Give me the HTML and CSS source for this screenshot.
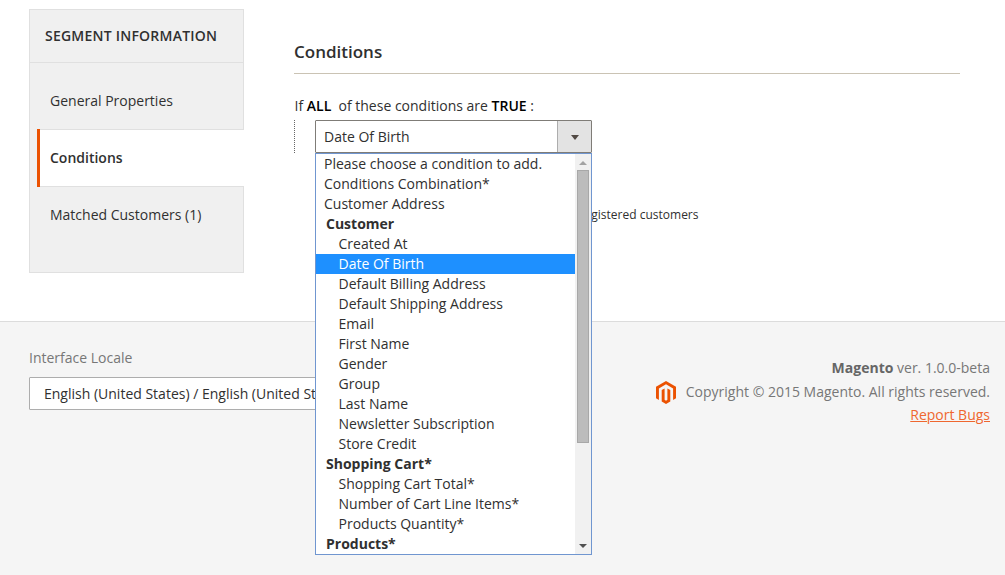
FILE: index.html
```html
<!DOCTYPE html>
<html lang="en">
<head>
<meta charset="utf-8">
<title>Customer Segment</title>
<link rel="stylesheet" href="styles.css">
</head>
<body>
<div class="page">
  <div class="content">
    <nav class="tabs">
      <div class="tabs-title">SEGMENT INFORMATION</div>
      <ul class="tabs-list">
        <li class="tab">General Properties</li>
        <li class="tab tab-active">Conditions</li>
        <li class="tab">Matched Customers (1)</li>
      </ul>
    </nav>
    <main class="main">
      <h2 class="heading">Conditions</h2>
      <p class="rule">If <b>ALL</b> &nbsp;of these conditions are <b>TRUE</b> :</p>
      <div class="rule-children">
        <div class="select">
          <span class="select-value">Date Of Birth</span>
          <span class="select-button"><svg width="8" height="5" viewBox="0 0 8 5"><path d="M0 0h8L4 5z" fill="#514943"/></svg></span>
          <div class="dropdown">
            <ul class="options">
              <li class="option">Please choose a condition to add.</li>
              <li class="option">Conditions Combination*</li>
              <li class="option">Customer Address</li>
              <li class="group">Customer</li>
              <li class="option nested">Created At</li>
              <li class="option nested selected">Date Of Birth</li>
              <li class="option nested">Default Billing Address</li>
              <li class="option nested">Default Shipping Address</li>
              <li class="option nested">Email</li>
              <li class="option nested">First Name</li>
              <li class="option nested">Gender</li>
              <li class="option nested">Group</li>
              <li class="option nested">Last Name</li>
              <li class="option nested">Newsletter Subscription</li>
              <li class="option nested">Store Credit</li>
              <li class="group">Shopping Cart*</li>
              <li class="option nested">Shopping Cart Total*</li>
              <li class="option nested">Number of Cart Line Items*</li>
              <li class="option nested">Products Quantity*</li>
              <li class="group">Products*</li>
            </ul>
            <div class="scrollbar">
              <svg class="arrow" width="16" height="16" viewBox="0 0 16 16"><path d="M4 11h8L8 7z" fill="#a3a3a3"/></svg>
              <div class="thumb"></div>
              <svg class="arrow arrow-down" width="16" height="16" viewBox="0 0 16 16"><path d="M4 6h8l-4 4z" fill="#505050"/></svg>
            </div>
          </div>
        </div>
      </div>
      <p class="note">registered customers</p>
    </main>
  </div>
  <footer class="footer">
    <div class="locale">
      <div class="locale-label">Interface Locale</div>
      <div class="locale-select">English (United States) / English (United States)</div>
    </div>
    <div class="legal">
      <div class="version"><strong>Magento</strong> ver. 1.0.0-beta</div>
      <div class="copyright">
        <svg class="logo" width="20" height="23" viewBox="0 0 20 23"><path d="M10 0l10 5.7v11.5l-2.9 1.7V7.4L10 3.3 2.9 7.4v11.5L0 17.2V5.7z" fill="#eb5202"/><path d="M5.7 9l2.9-1.6v11.4l1.4.9 1.4-.9V7.4L14.3 9v11.5L10 23l-4.3-2.5z" fill="#eb5202"/></svg>
        <span>Copyright © 2015 Magento. All rights reserved.</span>
      </div>
      <a class="report">Report Bugs</a>
    </div>
  </footer>
</div>
</body>
</html>
```
FILE: styles.css
```css
* { box-sizing: border-box; }
body {
  margin: 0;
  background: #fff;
  color: #303030;
  font: 14px/20px "Open Sans", "Noto Sans", sans-serif;
}
ul, p, h2 { margin: 0; padding: 0; list-style: none; }
.page {
  display: flex;
  flex-direction: column;
  width: 1005px;
  height: 575px;
  overflow: hidden;
}
.content {
  display: flex;
  align-items: flex-start;
  gap: 50px;
  height: 321px;
  padding: 9px 45px 0 29px;
}
.tabs {
  width: 215px;
  height: 264px;
  flex: none;
  background: #f0f0f0;
  border: 1px solid #e0e0e0;
}
.tabs-title {
  height: 53px;
  padding: 16px 15px 0;
  border-bottom: 1px solid #e0e0e0;
  font-weight: 600;
  letter-spacing: 0.23px;
}
.tabs-list { padding: 9px 0 0 7px; }
.tab {
  height: 57px;
  padding: 19px 0 0 13px;
}
.tab-active {
  height: 58px;
  margin-right: -1px;
  padding: 18px 0 0 10px;
  background:
    linear-gradient(#e0e0e0, #e0e0e0) top / 100% 1px no-repeat,
    linear-gradient(#e0e0e0, #e0e0e0) bottom / 100% 1px no-repeat,
    #fff;
  border-left: 3px solid #eb5202;
  padding-top: 19px;
  font-weight: 600;
}
.tab-active + .tab { padding-top: 18px; }
.main { width: 666px; }
.heading {
  height: 65px;
  padding-top: 33px;
  border-bottom: 1px solid #cac3b4;
  font-size: 17px;
  font-weight: 600;
}
.rule { padding: 22px 0 0 0.5px; }
.rule b { color: #000; font-weight: 600; }
.rule-children {
  height: 33px;
  margin-top: 4px;
  padding-left: 20px;
  border-left: 1px dotted #666;
}
.select {
  position: relative;
  display: flex;
  width: 277px;
  height: 33px;
  border: 1px solid #7f7c77;
  border-radius: 1px;
}
.select-value { flex: 1; padding: 6px 8px; }
.select-button {
  display: flex;
  align-items: center;
  justify-content: center;
  width: 34px;
  padding-top: 2px;
  background: #e3e3e3;
  border-left: 1px solid #adadad;
}
.dropdown {
  position: absolute;
  z-index: 2;
  top: 32px;
  left: -1px;
  display: flex;
  width: 277px;
  height: 402px;
  background: #fff;
  border: 1px solid #7096d0;
}
.options { flex: 1; }
.option { height: 20px; padding-left: 8px; }
.group { height: 20px; padding-left: 10px; font-weight: 700; }
.nested { padding-left: 22.5px; }
.selected { background: #1e90ff; color: #fff; }
.scrollbar {
  display: flex;
  flex-direction: column;
  align-items: center;
  width: 16px;
  background: #f1f1f1;
}
.arrow { flex: none; }
.arrow-down { margin-top: auto; }
.thumb {
  width: 12px;
  height: 273px;
  background: #bcbcbc;
  border: 1px solid #a8a8a8;
}
.note {
  padding: 52px 261.5px 0 0;
  font-size: 12px;
  text-align: right;
}
.footer {
  display: flex;
  justify-content: space-between;
  height: 254px;
  padding: 26px 15px 0 29px;
  background: #f5f5f5;
  border-top: 1px solid #dcdcdc;
  color: #777;
}
.locale { width: 360px; }
.locale-select {
  width: 360px;
  height: 33px;
  margin-top: 9px;
  padding: 6px 14px;
  background: #fff;
  border: 1px solid #adadad;
  border-radius: 1px;
  color: #303030;
}
.legal { padding-top: 8px; line-height: 24px; text-align: right; }
.version strong { color: #666; }
.copyright { display: flex; align-items: center; justify-content: flex-end; gap: 10px; }
.logo { margin-top: 1px; }
.report { display: block; line-height: 22px; color: #ef672f; text-decoration: underline; }
```
